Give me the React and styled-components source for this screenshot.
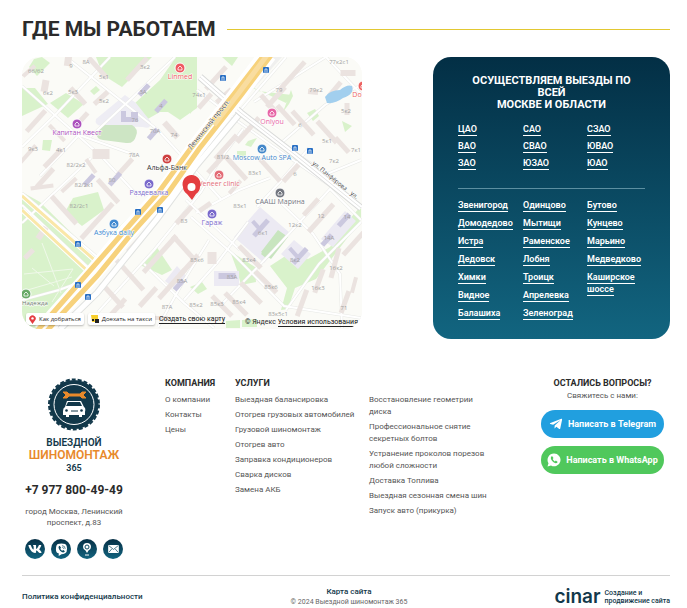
import React from "react";
import styled, { createGlobalStyle, css } from "styled-components";
import { FaVk, FaTelegramPlane } from "react-icons/fa";

const GlobalStyle = createGlobalStyle`
  *, *::before, *::after { box-sizing: border-box; }
  body { margin: 0; background: #fff; color: #2b2b2b; font-family: Roboto, "Liberation Sans", sans-serif; }
  a { color: inherit; text-decoration: none; }
  ul { margin: 0; padding: 0; list-style: none; }
  h2, h3, p { margin: 0; }
`;

const Page = styled.div`
  padding: 16px 17px 0 22px;
`;

const SectionHead = styled.header`
  display: flex;
  align-items: center;
  gap: 11px;
  height: 25px;
  margin-bottom: 16px;
`;

const Title = styled.h2`
  font-size: 21px;
  line-height: 24px;
  font-weight: 700;
  white-space: nowrap;
`;

const Rule = styled.div`
  flex: 1;
  height: 1px;
  margin-top: 2px;
  background: #e2c832;
`;

const WorkArea = styled.section`
  display: grid;
  grid-template-columns: minmax(0, 340fr) minmax(0, 237fr);
  column-gap: 71px;
  align-items: start;
`;

const MapCard = styled.div`
  position: relative;
  overflow: hidden;
  border-radius: 18px;
  background: #fafaf5;
  font-family: "Open Sans", sans-serif;

  > svg { display: block; width: 100%; height: auto; }
`;

const MapActions = styled.div`
  position: absolute;
  left: 4px;
  bottom: 4px;
  display: flex;
  align-items: center;
  gap: 4px;
`;

const MapButton = styled.button`
  display: flex;
  align-items: center;
  gap: 3px;
  height: 12px;
  padding: 0 3px;
  border: 0;
  border-radius: 2px;
  background: #fff;
  box-shadow: 0 1px 2px #0004;
  color: #222;
  font: 6px/12px "Open Sans", sans-serif;
  white-space: nowrap;
`;

const MapLink = styled.a`
  color: #111;
  font: 7px/8px Roboto, sans-serif;
  white-space: nowrap;
  border-bottom: 1px solid #222;
`;

const MapCredit = styled.div`
  position: absolute;
  right: 4px;
  bottom: 3px;
  font: 7px/8px Roboto, sans-serif;
  white-space: nowrap;
`;

const Panel = styled.aside`
  padding: 18px 25px 14px;
  border-radius: 18px;
  background: linear-gradient(#032f45, #126580);
  color: #fff;
`;

const PanelTitle = styled.h3`
  margin-bottom: 12px;
  padding: 0 12px;
  font-size: 11px;
  line-height: 12px;
  font-weight: 700;
  text-align: center;
`;

const Places = styled.div`
  display: grid;
  grid-template-columns: 65px 64px 1fr;

  & + & {
    margin-top: 14px;
    padding-top: 10px;
    border-top: 1px solid #5c8fa1;
  }
`;

const PlaceList = styled.ul`
  li {
    min-height: 18px;
    padding-bottom: 6px;
    font-size: 9px;
    line-height: 12px;
    font-weight: 600;
  }
  ${(p) => p.$dense && css`li { min-height: 17px; padding-bottom: 5px; }`}
  a { padding-bottom: 1px; border-bottom: 1px solid #fff; }
`;

const Footer = styled.footer`
  margin-top: 39px;
`;

const FooterMain = styled.div`
  display: grid;
  grid-template-columns: 143px 70px 134px minmax(0, 1fr) 123px;
  padding-right: 6px;
  padding-bottom: 16px;
`;

const Brand = styled.div`
  display: flex;
  flex-direction: column;
  align-items: center;
  width: 104px;
  text-align: center;
`;

const BrandLink = styled.a`
  display: flex;
  flex-direction: column;
  align-items: center;
  color: #12384a;
  font-size: 10px;
  line-height: 12px;
  font-weight: 600;

  svg { margin-bottom: 6px; }
  strong { color: #e8892b; font-size: 12px; line-height: 13px; font-weight: 600; }
  small { font-size: 9px; line-height: 12px; }
`;

const Phone = styled.a`
  margin-top: 9px;
  font-size: 12px;
  line-height: 15px;
  font-weight: 700;
  white-space: nowrap;
`;

const Address = styled.p`
  margin-top: 8px;
  color: #555;
  font-size: 8px;
  line-height: 11px;
`;

const Socials = styled.nav`
  display: flex;
  gap: 6px;
  margin-top: 11px;
`;

const SocialLink = styled.a`
  display: grid;
  place-items: center;
  width: 20px;
  height: 20px;
  border-radius: 50%;
  background: linear-gradient(#062f45, #126580);
  color: #fff;
`;

const LinkColumn = styled.nav`
  min-width: 0;
  max-width: 124px;
  ${(p) => p.$headless && css`padding-top: 16px;`}

  ul { display: grid; row-gap: 3px; }
  li { color: #555; font-size: 8px; line-height: 12px; }
`;

const ColumnTitle = styled.h3`
  height: 11px;
  margin-bottom: 5px;
  font-size: 9px;
  line-height: 11px;
  font-weight: 700;
  white-space: nowrap;
`;

const Contact = styled.div`
  display: flex;
  flex-direction: column;
  align-items: stretch;
  text-align: center;

  p { margin-bottom: 8px; color: #555; font-size: 8px; line-height: 12px; }
  ${ColumnTitle} { margin-bottom: 1px; }
`;

const Messenger = styled.a`
  display: flex;
  align-items: center;
  justify-content: center;
  gap: 5px;
  height: 28px;
  border-radius: 14px;
  background: ${(p) => p.$color};
  color: #fff;
  font-size: 9px;
  font-weight: 700;
  white-space: nowrap;

  & + & { margin-top: 8px; }
`;

const FooterBottom = styled.div`
  display: grid;
  grid-template-columns: 1fr auto 1fr;
  align-items: center;
  padding-top: 10px;
  border-top: 1px solid #d2d2d2;
  color: #12384a;
  font-size: 8px;
  line-height: 11px;
  font-weight: 500;
`;

const Copyright = styled.div`
  margin-left: 6px;
  text-align: center;
  p { color: #666; font-size: 7px; line-height: 10px; font-weight: 400; }
`;

const Maker = styled.a`
  display: flex;
  align-items: center;
  justify-content: flex-end;
  gap: 4px;
  font-size: 7px;
  line-height: 8px;

  b { font: 600 19px/16px Inter, sans-serif; }
`;

const GREENS = [
  "96,57 152,57 122,87 103,75", "176,57 197,57 197,108 180,120 168,112 160,112 146,120 134,104 160,80",
  "22,88 35,88 48,104 22,116", "66,93 84,104 68,118 50,103", "29,67 34,59 42,57 50,63 37,76",
  "222,57 238,57 232,66", "190,100 197,105 190,114",
  "22,197 38,203 97,260 86,279 50,329 22,329", "22,192 40,202 100,261 94,268 22,205",
  "73,198 98,192 104,210 82,226 65,212", "118,228 155,192 168,194 98,281 88,281",
  "156,246 172,270 162,275 140,265 151,256", "66,299 83,286 78,302 67,310",
  "230,251 255,267 256,282 241,285 237,270", "270,266 290,253 308,259 330,247 347,222 361,206 361,220 316,279 295,288 288,309 281,310 287,288",
  "190,287 202,282 207,289 198,294", "43,140 52,140 50,151 42,150", "90,91 96,86 100,90 94,95",
  "250,86 258,91 292,95 286,103", "283,112 291,90 293,96 289,104", "307,113 315,109 319,116 313,121",
  "342,121 352,126 345,132", "248,141 257,138 251,147 245,145", "237,151 246,151 246,159 237,157",
  "226,321 240,320 240,328 226,328", "242,320 257,319 257,327 242,327",
];

const BUILDINGS = [
  [29, 71, 16, 4, -42], [68, 61, 7, 10, 8], [45, 86, 7, 12, 10], [98, 68, 5, 28, -42], [137, 69, 5, 30, 42],
  [78, 96, 5, 22, -42], [101, 98, 18, 5, -42], [83, 118, 5, 14, 42], [36, 121, 5, 28, 42], [57, 133, 4, 22, -44],
  [28, 154, 4, 23, 42], [53, 158, 5, 25, 44], [101, 154, 17, 10, 0], [171, 130, 6, 20, -42], [125, 167, 5, 22, 42],
  [91, 166, 4, 17, -35], [45, 178, 5, 25, 42], [42, 187, 23, 4, -8], [69, 185, 20, 4, -43],
  [64, 210, 5, 37, -42], [108, 191, 5, 31, -42], [97, 221, 5, 47, 42],
  [216, 78, 5, 30, 42], [224, 96, 20, 5, -42], [205, 101, 5, 19, 42], [292, 76, 5, 38, 42], [276, 97, 5, 27, 42],
  [269, 104, 5, 24, -42], [286, 115, 5, 26, -42], [303, 123, 5, 32, -42], [313, 92, 10, 5, 5], [327, 132, 5, 29, -42],
  [342, 145, 5, 20, -42], [348, 73, 15, 6, 0], [347, 109, 5, 12, 0], [248, 130, 5, 33, 42], [236, 168, 5, 31, -42],
  [270, 170, 5, 30, -42], [291, 173, 5, 23, 42], [226, 147, 5, 32, 42], [216, 164, 5, 24, 42],
  [321, 218, 5, 37, 42], [311, 207, 5, 22, 42], [354, 243, 5, 32, 42], [335, 263, 5, 31, 15], [319, 281, 5, 25, 20],
  [302, 303, 5, 28, 20], [345, 302, 5, 23, 20], [212, 258, 9, 12, 0], [250, 257, 5, 31, -45], [266, 282, 5, 30, -45],
  [251, 293, 5, 29, -45], [236, 304, 5, 31, -45], [222, 306, 5, 28, -45], [142, 236, 5, 42, 42], [160, 254, 5, 49, 42],
  [183, 247, 5, 30, -42], [130, 275, 5, 40, -42], [112, 295, 5, 33, -42], [148, 297, 5, 25, 42], [189, 265, 5, 27, 42],
  [172, 284, 5, 39, 42], [158, 318, 20, 4, 0], [29, 254, 12, 5, -45], [184, 215, 5, 23, 42], [205, 207, 14, 5, -35],
  [42, 233, 6, 14, 35], [354, 285, 4, 16, 15], [235, 187, 4, 17, 42], [335, 89, 5, 18, 40], [118, 307, 5, 22, 42],
];

const SCHOOLS = [
  [144, 90, 5, 14, 42], [161, 106, 5, 15, 42], [89, 180, 5, 14, 42], [115, 179, 5, 16, 42], [153, 134, 5, 13, 42],
  [261, 228, 5, 21, 42], [257, 226, 4, 13, -42], [300, 256, 5, 20, 42], [294, 253, 4, 13, -42], [344, 220, 5, 16, 42],
  [327, 240, 5, 14, 42], [227, 276, 17, 6, 0], [179, 285, 5, 13, 42],
];

const ROADS = [
  "M22 205 L92 271 L45 329", "M22 193 L102 261", "M22 147 L57 113 L110 57", "M22 86 L102 157 L138 196", "M66 57 L158 130 L221 199",
  "M90 137 L132 98 L175 57", "M40 176 L79 135 L135 155", "M197 90 L239 122 L274 147 L361 207", "M238 113 L286 57", "M254 102 L326 57 L361 94",
  "M243 129 L221 158 L201 192 L154 250 L98 312", "M250 124 L327 174 L361 160", "M280 144 L325 105 L361 85",
  "M257 207 L279 183 L309 148", "M196 213 L239 190 L270 178", "M144 264 L184 303 L214 328", "M184 300 L217 263 L248 222",
  "M191 217 L234 255 L284 306 L361 318", "M222 304 L272 252 L331 188", "M209 240 L183 282 L158 327", "M240 250 L186 200",
  "M286 310 L319 264 L361 222", "M281 203 L313 234 L340 274 L342 328", "M330 189 L361 220", "M91 158 L54 193 L22 223",
  "M22 300 L59 290 L86 280", "M102 253 L146 206 L180 172",
];

const NUMBERS = [
  [36, 73, "66/62"], [71, 68, "9"], [86, 64, "8А"], [104, 79, "5к1"], [145, 69, "3к2"], [48, 95, "6к2"], [73, 94, "5к3"],
  [104, 103, "5к2"], [143, 94, "3А"], [161, 108, "4"], [155, 133, "70А"], [174, 137, "74"], [135, 122, "76"], [33, 151, "9к3"],
  [61, 152, "4к1"], [76, 167, "82/2к2"], [84, 187, "82/2к1"], [112, 182, "80"], [134, 157, "78А"], [199, 97, "74к1"],
  [279, 92, "79"], [316, 92, "79к2"], [339, 64, "77к2с1"], [346, 113, "5к2"], [300, 127, "6"], [327, 143, "5к1"], [334, 163, "7к2"],
  [356, 152, "7к1"], [223, 159, "81/2"], [255, 175, "83к1"], [295, 176, "6"], [240, 208, "83к1"], [263, 235, "6к1"],
  [295, 227, "12к2"], [321, 218, "12"], [347, 219, "14"], [329, 240, "14А"], [295, 262, "8к2"], [336, 270, "16к2"],
  [318, 290, "16к3"], [249, 262, "83к4"], [197, 262, "85к6"], [232, 279, "83А"], [271, 289, "85к6"], [239, 304, "85к4"],
  [217, 306, "85к3"], [196, 307, "85к2"], [278, 316, "83к5с1"], [344, 310, "71"], [79, 208, "82/2с1"], [184, 223, "83"],
  [182, 283, "85А"], [167, 309, "87А"],
];

const POIS = [
  { x: 180, y: 68, color: "#ef5a62", label: "Linmed" },
  { x: 77, y: 124, color: "#ac50bd", label: "Капитан Квест" },
  { x: 272, y: 113, color: "#e765a6", label: "Onlyou" },
  { x: 262, y: 149, color: "#4387c9", label: "Moscow Auto SPA" },
  { x: 149, y: 184, color: "#7969cb", label: "Раздевалка" },
  { x: 219, y: 175, color: "#e36c76", label: "Veneer clinic" },
  { x: 212, y: 214, color: "#7969cb", label: "Гараж" },
  { x: 114, y: 224, color: "#408bd0", label: "Азбука daily" },
  { x: 280, y: 193, color: "#737780", label: "СААШ Марина" },
  { x: 167, y: 159, color: "#ce3f3f", label: "Альфа-Банк", ink: "#333" },
  { x: 363, y: 86, labelX: 357, color: "#ed6260", label: "Do" },
  { x: 26, y: 294, labelX: 35, color: "#68aa68", label: "Надежда", ink: "#667466", size: 6 },
];

const STOPS = [[223, 78], [266, 70], [295, 148], [310, 151], [138, 212], [160, 210], [78, 244], [78, 285], [88, 297]];

const block = (fill) => ([x, y, w, h, r], i) => (
  <rect key={i} x={x - w / 2} y={y - h / 2} width={w} height={h} fill={fill} transform={`rotate(${r} ${x} ${y})`} />
);

function CityMap() {
  return (
    <svg viewBox="22 57 340 272" role="img" aria-label="Карта: Ленинский проспект, 83">
      <rect x="22" y="57" width="340" height="272" fill="#fbfbf7" />
      <g fill="#d9f2cb">{GREENS.map((p) => <polygon key={p} points={p} />)}</g>
      <path d="M125 95 L136 103 L151 122 Q151 130 143 127 L102 126 Q94 125 96 119 Z" fill="#eeedf4" />
      <path d="M102 125 H132 Q139 129 136 136 Q134 144 126 143 L103 140 Q96 139 96 132 Z" fill="#cde5c4" />
      <path d="M260 207 L290 233 L264 263 L234 237 Z M294 240 L311 254 L298 269 L281 254 Z M214 271 H239 V286 H214 Z M177 266 L188 278 L178 291 L165 281 Z M345 211 L356 221 L333 247 L321 239 Z" fill="#eceaf3" />
      <path d="M278 230 L288 237 L271 259 L261 252 Z M265 249 L272 255 L267 259 L261 254 Z" fill="#c8e5bf" />
      <path d="M282 57 L269 57 L190 158 L197 159 L240 104 Z" fill="#f0f0ef" />
      <g fill="none" stroke="#e8e9e6" strokeWidth="3">{ROADS.map((d) => <path key={d} d={d} />)}</g>
      <g fill="none" stroke="#fff" strokeWidth="2">{ROADS.map((d) => <path key={d} d={d} />)}</g>
      {BUILDINGS.map(block("#ebe3e0"))}
      {SCHOOLS.map(block("#cbc8df"))}
      <path d="M121 111 h5 v6 h5 v-5 h7 v10 h-17 z" fill="#cbc8df" />
      <path d="M325 97 Q330 90 340 90 Q347 84 352 86 Q355 94 343 98 Q335 104 327 103 Z" fill="#a2cfee" />
      <path d="M242 111 L196 166 L157 219 L97 293 L60 329" fill="none" stroke="#e0e2e0" strokeWidth="7" />
      <path d="M242 111 L196 166 L157 219 L97 293 L60 329" fill="none" stroke="#fff" strokeWidth="5" />
      <path d="M22 210 L93 276 M22 196 L98 263" fill="none" stroke="#fff" strokeWidth="5" />
      <path d="M22 210 L93 276 M22 196 L98 263" fill="none" stroke="#fae7a8" strokeWidth="3" />
      <path d="M200 77 L241 113 L294 154 L361 208" fill="none" stroke="#d9dad9" strokeWidth="7" />
      <path d="M200 77 L241 113 L294 154 L361 208" fill="none" stroke="#fff" strokeWidth="5" />
      <path d="M200 77 L241 113 L294 154 L361 208" fill="none" stroke="#e4e4e4" strokeWidth="1" />
      <path d="M268 54 L238 94 L195 149 L163 194 L128 231 L91 276 L55 316 L42 332" fill="none" stroke="#fff" strokeWidth="18" />
      <path d="M265 54 L234 94 L191 148 L158 193 L121 235 L87 274 L52 314 L36 332 M272 54 L242 94 L199 149 L168 193 L133 232 L97 276 L61 315 L46 332" fill="none" stroke="#f7d27c" strokeWidth="5" />
      <path d="M268 54 L238 94 L214 125" fill="none" stroke="#f9dda0" strokeWidth="5" />
      <path d="M24 274 L73 269 L52 302 M32 268 L54 286 M42 243 L61 293 M24 291 L72 277" fill="none" stroke="#eff8e9" />
      <g fontFamily="Open Sans" fontSize="6" fill="#a19f9f" textAnchor="middle">
        {NUMBERS.map(([x, y, text]) => <text key={`${x}-${y}`} x={x} y={y}>{text}</text>)}
      </g>
      {STOPS.map(([x, y]) => (
        <g key={`${x}-${y}`}>
          <rect x={x - 3} y={y - 3} width="6" height="6" rx="1" fill="#286fc4" />
          <path d={`M${x - 1} ${y + 1} V${y - 1} H${x + 1} V${y + 1} M${x - 2} ${y + 2} H${x + 2}`} fill="none" stroke="#fff" strokeWidth=".7" />
        </g>
      ))}
      {POIS.map(({ x, y, labelX = x, color, label, ink = color, size = 7 }) => (
        <g key={label}>
          <circle cx={x} cy={y} r="5" fill={color} stroke="#fff" />
          <path d={`M${x - 2} ${y + 2} V${y} L${x} ${y - 2} L${x + 2} ${y} V${y + 2} Z`} fill="none" stroke="#fff" strokeWidth=".8" />
          <text x={labelX} y={y + 11} textAnchor="middle" fontFamily="Open Sans" fontSize={size} fill={ink} stroke="#fff" strokeWidth="1" paintOrder="stroke">{label}</text>
        </g>
      ))}
      <g fontFamily="Open Sans" fill="#444" stroke="#fff" strokeWidth="1" paintOrder="stroke">
        <text x="191" y="150" fontSize="7" transform="rotate(-51 191 150)">Ленинский просп.</text>
        <text x="312" y="164" fontSize="6" transform="rotate(39 312 164)">ул. Панфёрова</text>
        <text x="350" y="194" fontSize="6" transform="rotate(39 350 194)">ул.</text>
      </g>
      <path d="M192 200 L187 194 Q183 191 183 187 A9 9 0 1 1 200 187 Q200 191 196 194 Z" fill="#e43d40" />
      <circle cx="191.5" cy="187" r="4" fill="#fff" />
    </svg>
  );
}

function PinIcon() {
  return (
    <svg width="7" height="9" viewBox="0 0 7 9" aria-hidden="true">
      <path d="M3.5 9 L1 5.5 A3.2 3.2 0 1 1 6 5.5 Z" fill="#e43d40" />
      <circle cx="3.5" cy="3.4" r="1.2" fill="#fff" />
    </svg>
  );
}

function TaxiIcon() {
  return (
    <svg width="8" height="8" viewBox="0 0 8 8" aria-hidden="true">
      <path d="M0 0 H7 V4 H4 V7 H1 Z" fill="#f8cf2d" />
      <path d="M4 4 H8 V8 H4 Z M1 4 H3 V6 H1 Z" fill="#222" />
    </svg>
  );
}

function TireLogo() {
  return (
    <svg width="54" height="53" viewBox="0 0 54 53" aria-hidden="true">
      <circle cx="27" cy="26.5" r="24.5" fill="#12384a" />
      <circle cx="27" cy="26.5" r="25" fill="none" stroke="#12384a" strokeWidth="2" strokeDasharray="4 2.04" />
      <circle cx="27" cy="26.5" r="20" fill="none" stroke="#fff" />
      <path d="M16 14 L20 14 L22 16 H33 L35 14 H39 L36 17 L39 20 H35 L33 18 H22 L20 20 H16 L19 17 Z" fill="#e8892b" stroke="#e8892b" strokeLinejoin="round" />
      <path d="M20 23 H34 L37 29 Q39 30 38 34 V37 H35 V39 H32 V37 H22 V39 H19 V37 H16 V33 Q16 30 18 29 Z" fill="#fff" />
      <path d="M21 24 H33 L35 28 H19 Z" fill="#12384a" />
      <path d="M24 33 H31" stroke="#12384a" />
      <circle cx="19.5" cy="32.5" r="1.3" fill="#12384a" />
      <circle cx="34.5" cy="32.5" r="1.3" fill="#12384a" />
    </svg>
  );
}

const HANDSET = "M5 3 Q3.6 3.7 3.8 5.2 Q4.7 8.9 8.6 10.2 Q10 10.3 10.7 9 L8.9 7.6 L7.8 8.4 Q6.2 7.6 5.7 6.1 L6.5 5.1 Z";

function ViberIcon() {
  return (
    <svg width="13" height="13" viewBox="0 0 14 14" aria-hidden="true">
      <path d="M3 1 Q7 0 11 1 Q13 2 13 6 Q13 10 11 11 Q9 12 7 12 L4 14 V11 Q1 11 1 7 Q1 2 3 1 Z" fill="#fff" />
      <path d={HANDSET} fill="#0b4a62" />
      <path d="M7.5 2.8 Q11 3 11 6.3 M7.8 4.6 Q9.2 4.8 9.3 6.2" fill="none" stroke="#0b4a62" strokeWidth=".7" />
    </svg>
  );
}

function WhatsAppIcon() {
  return (
    <svg width="14" height="14" viewBox="0 0 14 14" aria-hidden="true">
      <path d="M7 0.5 A6.4 6.4 0 1 1 4 12.5 L0.5 13.5 L1.5 10.2 A6.4 6.4 0 0 1 7 0.5 Z" fill="#fff" />
      <path d={HANDSET} fill="#50c85c" />
    </svg>
  );
}

function LocationIcon() {
  return (
    <svg width="10" height="13" viewBox="0 0 10 13" fill="none" aria-hidden="true">
      <path d="M5 10 L3.5 7.5 Q1 6 1 4 A4 4 0 1 1 9 4 Q9 6 6.5 7.5 Z" fill="#fff" />
      <circle cx="5" cy="4" r="2" stroke="#0b4a62" />
      <path d="M3 12 H7" stroke="#fff" />
    </svg>
  );
}

function MailIcon() {
  return (
    <svg width="11" height="8" viewBox="0 0 12 9" aria-hidden="true">
      <rect width="12" height="9" rx="1" fill="#fff" />
      <path d="M1 1 L6 5 L11 1 M1 8 L4 4.5 M11 8 L8 4.5" fill="none" stroke="#0b4a62" strokeWidth=".8" />
    </svg>
  );
}

const DISTRICTS = [["ЦАО", "ВАО", "ЗАО"], ["САО", "СВАО", "ЮЗАО"], ["СЗАО", "ЮВАО", "ЮАО"]];
const TOWNS = [
  ["Звенигород", "Домодедово", "Истра", "Дедовск", "Химки", "Видное", "Балашиха"],
  ["Одинцово", "Мытищи", "Раменское", "Лобня", "Троицк", "Апрелевка", "Зеленоград"],
  ["Бутово", "Кунцево", "Марьино", "Медведково", "Каширское шоссе"],
];
const COMPANY = ["О компании", "Контакты", "Цены"];
const SERVICES = ["Выездная балансировка", "Отогрев грузовых автомобилей", "Грузовой шиномонтаж", "Отогрев авто", "Заправка кондиционеров", "Сварка дисков", "Замена АКБ"];
const MORE_SERVICES = ["Восстановление геометрии диска", "Профессиональное снятие секретных болтов", "Устранение проколов порезов любой сложности", "Доставка Топлива", "Выездная сезонная смена шин", "Запуск авто (прикурка)"];

const Links = ({ items }) => (
  <ul>{items.map((item) => <li key={item}><a href="#">{item}</a></li>)}</ul>
);

const PlaceColumns = ({ columns, dense }) => (
  <Places>
    {columns.map((items) => (
      <PlaceList key={items[0]} $dense={dense}>
        {items.map((item) => <li key={item}><a href="#">{item}</a></li>)}
      </PlaceList>
    ))}
  </Places>
);

export default function App() {
  return (
    <Page>
      <GlobalStyle />
      <main>
        <SectionHead><Title>ГДЕ МЫ РАБОТАЕМ</Title><Rule /></SectionHead>
        <WorkArea>
          <MapCard>
            <CityMap />
            <MapActions>
              <MapButton type="button"><PinIcon />Как добраться</MapButton>
              <MapButton type="button"><TaxiIcon />Доехать на такси</MapButton>
              <MapLink href="#">Создать свою карту</MapLink>
            </MapActions>
            <MapCredit>© Яндекс <MapLink href="#">Условия использования</MapLink></MapCredit>
          </MapCard>
          <Panel>
            <PanelTitle>ОСУЩЕСТВЛЯЕМ ВЫЕЗДЫ ПО ВСЕЙ<br />МОСКВЕ И ОБЛАСТИ</PanelTitle>
            <PlaceColumns columns={DISTRICTS} dense />
            <PlaceColumns columns={TOWNS} />
          </Panel>
        </WorkArea>
      </main>
      <Footer>
        <FooterMain>
          <Brand>
            <BrandLink href="#">
              <TireLogo />
              <span>ВЫЕЗДНОЙ</span>
              <strong>ШИНОМОНТАЖ</strong>
              <small>365</small>
            </BrandLink>
            <Phone href="tel:+79778004949">+7 977 800-49-49</Phone>
            <Address>город Москва, Ленинский проспект, д.83</Address>
            <Socials aria-label="Социальные сети">
              <SocialLink href="#" aria-label="ВКонтакте"><FaVk size={14} /></SocialLink>
              <SocialLink href="#" aria-label="Viber"><ViberIcon /></SocialLink>
              <SocialLink href="#" aria-label="Адрес на карте"><LocationIcon /></SocialLink>
              <SocialLink href="#" aria-label="Почта"><MailIcon /></SocialLink>
            </Socials>
          </Brand>
          <LinkColumn><ColumnTitle>КОМПАНИЯ</ColumnTitle><Links items={COMPANY} /></LinkColumn>
          <LinkColumn><ColumnTitle>УСЛУГИ</ColumnTitle><Links items={SERVICES} /></LinkColumn>
          <LinkColumn $headless><Links items={MORE_SERVICES} /></LinkColumn>
          <Contact>
            <ColumnTitle>ОСТАЛИСЬ ВОПРОСЫ?</ColumnTitle>
            <p>Свяжитесь с нами:</p>
            <Messenger href="#" $color="#219fdf"><FaTelegramPlane size={14} />Написать в Telegram</Messenger>
            <Messenger href="#" $color="#50c85c"><WhatsAppIcon />Написать в WhatsApp</Messenger>
          </Contact>
        </FooterMain>
        <FooterBottom>
          <a href="#">Политика конфиденциальности</a>
          <Copyright><a href="#">Карта сайта</a><p>© 2024 Выездной шиномонтаж 365</p></Copyright>
          <Maker href="#"><b>cinar</b><span>Создание и<br />продвижение сайта</span></Maker>
        </FooterBottom>
      </Footer>
    </Page>
  );
}
